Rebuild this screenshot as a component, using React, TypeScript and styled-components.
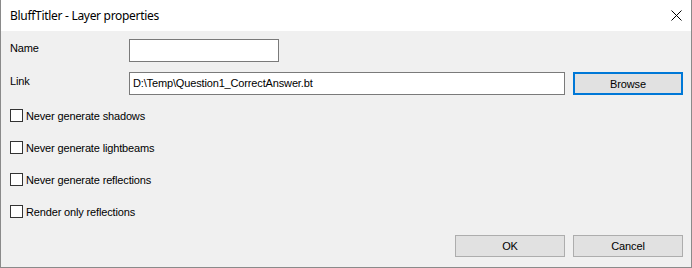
import React from "react";
import styled, { createGlobalStyle } from "styled-components";

const Global = createGlobalStyle`
  html, body { margin: 0; padding: 0; background: #f0f0f0; }
  * { box-sizing: border-box; }
`;

const Window = styled.div`
  width: 692px;
  height: 268px;
  background: #f0f0f0;
  border: 1px solid #8a8a8a;
  border-top: none;
  display: flex;
  flex-direction: column;
  font-family: "Liberation Sans", Arial, sans-serif;
  font-size: 11px;
  letter-spacing: -0.15px;
  color: #000;
`;

const TitleBar = styled.div`
  height: 31px;
  background: #fff;
  display: flex;
  align-items: center;
  justify-content: space-between;
  padding: 0 9px 1px 9px;
  margin: 0 -1px;
  border-left: 1px solid #8a8a8a;
  border-right: 1px solid #8a8a8a;
`;

const Title = styled.span`
  font-family: "Noto Sans", "Segoe UI", sans-serif;
  font-size: 12px;
  letter-spacing: -0.3px;
`;

const CloseIcon = styled.svg`
  width: 11px;
  height: 11px;
  margin-top: 1px;
`;

const Body = styled.div`
  flex: 1;
  display: flex;
  flex-direction: column;
  padding: 8px 8px 10px 8px;
`;

const FieldRow = styled.div<{ $gap?: number }>`
  display: flex;
  align-items: flex-start;
  margin-top: ${(p) => p.$gap ?? 0}px;
`;

const Label = styled.span`
  width: 120px;
  padding-left: 1px;
  padding-top: 3px;
`;

const TextBox = styled.div<{ $width: number }>`
  width: ${(p) => p.$width}px;
  height: 23px;
  background: #fff;
  border: 1px solid #7a7a7a;
  padding: 4px 0 0 3px;
  white-space: nowrap;
`;

const Button = styled.div<{ $primary?: boolean }>`
  width: 110px;
  height: ${(p) => (p.$primary ? 23 : 22)}px;
  background: #e1e1e1;
  border: ${(p) => (p.$primary ? "2px solid #0078d7" : "1px solid #adadad")};
  display: flex;
  align-items: center;
  justify-content: center;
  margin-left: 8px;
`;

const CheckRow = styled.div<{ $gap: number }>`
  display: flex;
  align-items: center;
  height: 13px;
  margin-top: ${(p) => p.$gap}px;
  padding-left: 1px;
`;

const Box = styled.span`
  width: 13px;
  height: 13px;
  border: 1px solid #333;
  background: #fff;
  margin-right: 3px;
`;

const Footer = styled.div`
  margin-top: auto;
  display: flex;
  justify-content: flex-end;
`;

const checks = [
  "Never generate shadows",
  "Never generate lightbeams",
  "Never generate reflections",
  "Render only reflections",
];

export default function App() {
  return (
    <>
      <Global />
      <Window>
        <TitleBar>
          <Title>BluffTitler - Layer properties</Title>
          <CloseIcon viewBox="0 0 11 11">
            <path d="M0.5 0.5 L10.5 10.5 M10.5 0.5 L0.5 10.5" stroke="#000" strokeWidth="1" fill="none" />
          </CloseIcon>
        </TitleBar>
        <Body>
          <FieldRow>
            <Label>Name</Label>
            <TextBox $width={150} />
          </FieldRow>
          <FieldRow $gap={10}>
            <Label>Link</Label>
            <TextBox $width={436}>D:\Temp\Question1_CorrectAnswer.bt</TextBox>
            <Button $primary>Browse</Button>
          </FieldRow>
          {checks.map((c, i) => (
            <CheckRow key={c} $gap={i === 0 ? 14 : 19}>
              <Box />
              {c}
            </CheckRow>
          ))}
          <Footer>
            <Button>OK</Button>
            <Button>Cancel</Button>
          </Footer>
        </Body>
      </Window>
    </>
  );
}
